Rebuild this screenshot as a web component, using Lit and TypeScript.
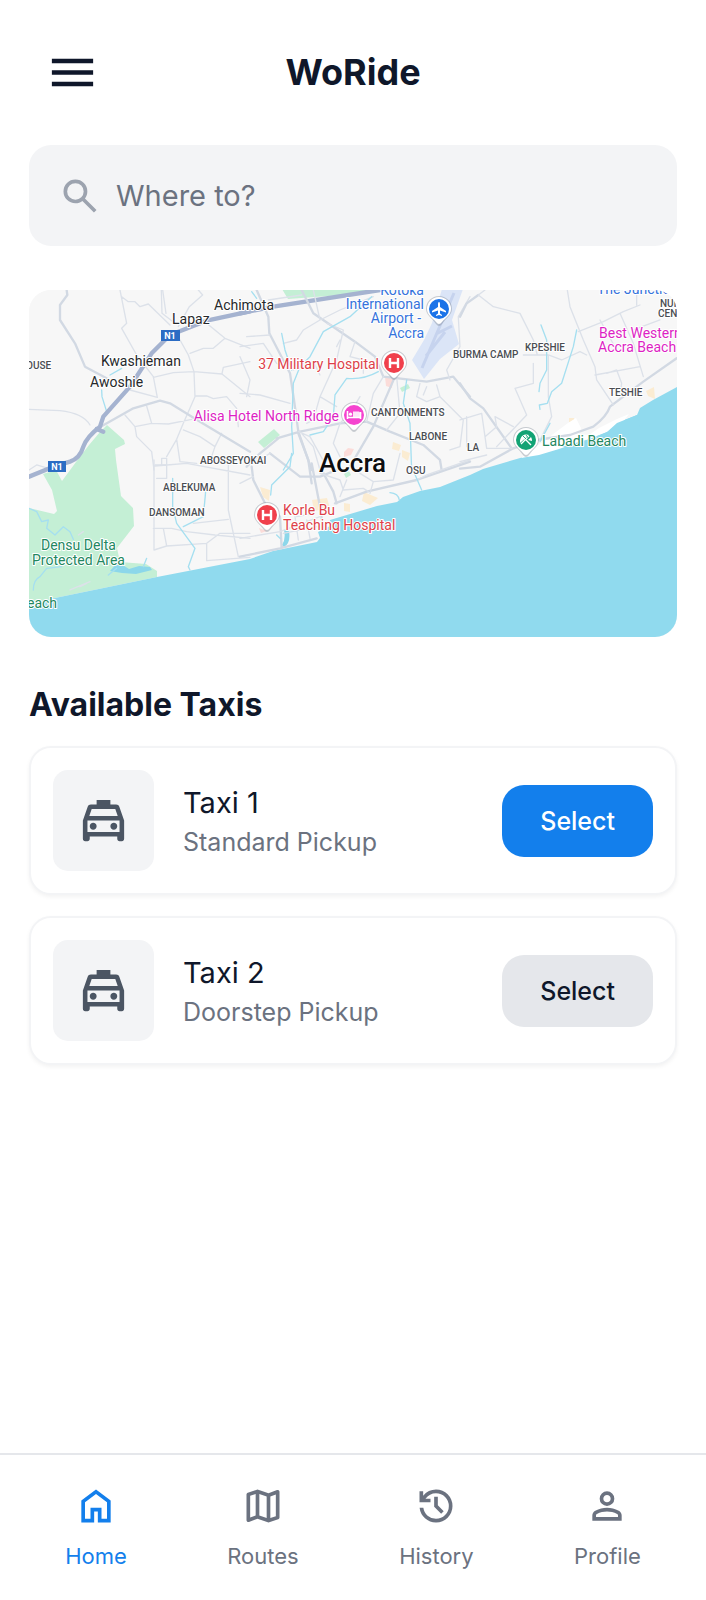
import { LitElement, html, css, svg } from "lit";
import { customElement, property, state } from "lit/decorators.js";

const ICONS: Record<string, string> = {
  menu: "M3 18h18v-2H3v2Zm0-5h18v-2H3v2Zm0-7v2h18V6H3Z",
  search:
    "m19.6 21-6.3-6.3q-.75.6-1.725.95T9.5 16q-2.725 0-4.612-1.888T3 9.5t1.888-4.612T9.5 3t4.613 1.888T16 9.5q0 1.1-.35 2.075T14.7 13.3l6.3 6.3-1.4 1.4ZM9.5 14q1.875 0 3.188-1.312T14 9.5t-1.312-3.187T9.5 5 6.313 6.313 5 9.5t1.313 3.188T9.5 14Z",
  taxi:
    "M6 19v1q0 .425-.288.713T5 21H4q-.425 0-.712-.288T3 20v-8l2.1-6q.15-.45.538-.725T6.5 5H9V3h6v2h2.5q.475 0 .863.275T18.9 6l2.1 6v8q0 .425-.288.713T20 21h-1q-.425 0-.712-.288T18 20v-1H6Zm-.2-9h12.4l-1.05-3H6.85L5.8 10ZM5 17h14v-5H5v5Zm2.5-1q.625 0 1.063-.438T9 14.5t-.438-1.062T7.5 13t-1.062.438T6 14.5t.438 1.063T7.5 16Zm9 0q.625 0 1.063-.438T18 14.5t-.438-1.062T16.5 13t-1.062.438T15 14.5t.438 1.063T16.5 16Z",
  home: "M6 19h3v-6h6v6h3v-9l-6-4.5L6 10v9Zm-2 2V9l8-6 8 6v12h-7v-6h-2v6H4Z",
  map:
    "m15 21-6-2.1-4.65 1.8q-.5.2-.925-.112T3 19.75v-14q0-.325.188-.575T3.7 4.8L9 3l6 2.1 4.65-1.8q.5-.2.925.113T21 4.25v14q0 .325-.188.575t-.512.375L15 21Zm-1-2.45V6.85l-4-1.4v11.7l4 1.4Zm2 0 3-1V5.7l-3 1.15v11.7ZM5 18.3l3-1.15V5.45l-3 1v11.85Z",
  history:
    "M12 21q-3.45 0-6.012-2.287T3.05 13H5.1q.35 2.6 2.313 4.3T12 19q2.925 0 4.963-2.037T19 12q0-2.925-2.037-4.962T12 5q-1.725 0-3.225.8T6.25 8H9v2H3V4h2v2.35q1.275-1.6 3.113-2.475T12 3q1.875 0 3.513.713t2.85 1.924 1.925 2.85T21 12q0 1.875-.712 3.513t-1.925 2.85-2.85 1.925T12 21Zm2.8-4.8L11 12.4V7h2v4.6l3.2 3.2-1.4 1.4Z",
  person:
    "M12 12q-1.65 0-2.825-1.175T8 8t1.175-2.825T12 4t2.825 1.175T16 8t-1.175 2.825T12 12Zm-8 8v-2.8q0-.85.438-1.563T5.6 14.55q1.55-.775 3.15-1.163T12 13t3.25.388 3.15 1.162q.725.375 1.163 1.088T20 17.2V20H4Zm2-2h12v-.8q0-.275-.138-.5t-.362-.35q-1.35-.675-2.725-1.012T12 15t-2.775.338T6.5 16.35q-.225.125-.363.35T6 17.2v.8Zm6-8q.825 0 1.413-.588T14 8t-.588-1.412T12 6t-1.412.588T10 8t.588 1.413T12 10Z",
};

@customElement("ui-icon")
class UiIcon extends LitElement {
  @property() name = "menu";
  static styles = css`
    :host { display: block; width: 44px; height: 44px; flex: none; }
    svg { display: block; width: 100%; height: 100%; fill: currentColor; }
  `;
  render() {
    return html`<svg viewBox="0 0 24 24" aria-hidden="true"><path fill-rule="evenodd" d=${ICONS[this.name]} /></svg>`;
  }
}

type Label = { x: number; y: number; kind: string; text: string; end?: boolean };

const LABELS: Label[] = [
  { x: 214, y: 310, kind: "town", text: "Achimota" },
  { x: 172, y: 324, kind: "town", text: "Lapaz" },
  { x: 101, y: 366, kind: "town", text: "Kwashieman" },
  { x: 90, y: 387, kind: "town", text: "Awoshie" },
  { x: 319, y: 472, kind: "city", text: "Accra" },
  { x: 26, y: 369, kind: "area", text: "OUSE" },
  { x: 453, y: 358, kind: "area", text: "BURMA CAMP" },
  { x: 525, y: 351, kind: "area", text: "KPESHIE" },
  { x: 371, y: 416, kind: "area", text: "CANTONMENTS" },
  { x: 409, y: 440, kind: "area", text: "LABONE" },
  { x: 467, y: 451, kind: "area", text: "LA" },
  { x: 609, y: 396, kind: "area", text: "TESHIE" },
  { x: 660, y: 307, kind: "area", text: "NUN" },
  { x: 658, y: 317, kind: "area", text: "CEN" },
  { x: 200, y: 464, kind: "area", text: "ABOSSEYOKAI" },
  { x: 163, y: 491, kind: "area", text: "ABLEKUMA" },
  { x: 149, y: 516, kind: "area", text: "DANSOMAN" },
  { x: 406, y: 474, kind: "area", text: "OSU" },
  { x: 424, y: 295, kind: "blue", text: "Kotoka", end: true },
  { x: 424, y: 309, kind: "blue", text: "International", end: true },
  { x: 421, y: 323, kind: "blue", text: "Airport -", end: true },
  { x: 424, y: 338, kind: "blue", text: "Accra", end: true },
  { x: 597, y: 294, kind: "blue", text: "The Junctic" },
  { x: 379, y: 369, kind: "red", text: "37 Military Hospital", end: true },
  { x: 283, y: 515, kind: "red", text: "Korle Bu" },
  { x: 283, y: 530, kind: "red", text: "Teaching Hospital" },
  { x: 339, y: 421, kind: "pink", text: "Alisa Hotel North Ridge", end: true },
  { x: 599, y: 338, kind: "pink", text: "Best Western" },
  { x: 598, y: 352, kind: "pink", text: "Accra Beach" },
  { x: 542, y: 446, kind: "green", text: "Labadi Beach" },
  { x: 41, y: 550, kind: "green", text: "Densu Delta" },
  { x: 32, y: 565, kind: "green", text: "Protected Area" },
  { x: 27, y: 608, kind: "green", text: "each" },
];

const pin = (x: number, y: number, color: string, glyph: unknown) => svg`
  <g transform="translate(${x} ${y})">
    <path d="M-13 0a13 13 0 1 1 26 0c0 6-6 9-10 15q-3 4-6 0c-4-6-10-9-10-15Z" fill="#7d8794" opacity=".4" />
    <path d="M-12 0a12 12 0 1 1 24 0c0 6-6 9-9 13q-3 4-6 0c-3-4-9-7-9-13Z" fill="#fff" />
    <circle r="10" fill=${color} />${glyph}
  </g>`;

const hospital = svg`<path d="M-4 -5v10M4 -5v10M-4 0h8" fill="none" stroke="#fff" stroke-width="2.4" />`;
const plane = svg`<path d="M0 -7q1 0 1 2v3l6 4v1.500l-6 -2v3l2 1.500v1l-3 -1l-3 1v-1l2 -1.500v-3l-6 2v-1.500l6 -4v-3q0 -2 1 -2Z" fill="#fff" />`;
const bed = svg`<path d="M-6.500 -4v8M-6.500 2.500h13M6.500 4v-7" fill="none" stroke="#fff" stroke-width="1.600" /><path d="M-1 -3.500h6l2 2v4h-8Z" fill="#fff" opacity=".85" /><circle cx="-3.500" cy="-.8" r="1.600" fill="#fff" />`;
const umbrella = svg`<path d="M-6 1a6.500 6.500 0 0 1 9 -6l-9 8Z M5 -3a6 6 0 0 1 1 4l-4 -1Z" fill="#fff" /><path d="M-2 -2l7 7M-5 4l8 -8" stroke="#fff" stroke-width="1.400" /><path d="M-3 -4l3 3M0 -5l3 4" stroke="#12a374" stroke-width=".9" />`;

@customElement("city-map")
class CityMap extends LitElement {
  static styles = css`
    :host { display: block; border-radius: 22px; overflow: hidden; background: #f7f7f7; }
    svg { display: block; width: 100%; height: auto; }
    text { font-family: Roboto, sans-serif; font-size: 14px; paint-order: stroke; stroke: #fff; stroke-width: 2px; stroke-linejoin: round; }
    .end { text-anchor: end; }
    .town { fill: #26282b; }
    .city { fill: #0d0e10; font-size: 26px; font-weight: 500; }
    .area { fill: #4a4d52; font-size: 10px; font-weight: 500; }
    .blue { fill: #3573dc; }
    .red { fill: #dd3f49; }
    .pink { fill: #dd1fc4; }
    .green { fill: #23875f; }
    .shield { fill: #fff; stroke: none; font-size: 9px; font-weight: 700; text-anchor: middle; }
    .line { fill: none; stroke-linejoin: round; stroke-linecap: round; }
    .minor { stroke: #dce1e9; stroke-width: 4; }
    .major { stroke: #d2d9e3; stroke-width: 7; }
    .trunk { stroke: #a5b3d0; stroke-width: 13; }
    .river { stroke: #a5dff0; stroke-width: 4; }
  `;

  render() {
    return html`
      <svg viewBox="29 290 648 347" role="img" aria-label="Map of Accra">
        <rect x="29" y="290" width="648" height="347" fill="#f7f7f7" />

        <path fill="#c4efd5" d="M107 425L124 440L125 444L115 449L116 460L121 496L133 508L134 526L117 548L120 562L146 564L157 571V577L55 598L29 606V508L54 514L57 511L52 490L43 474L56 470L62 481L76 462L89 445L100 432Z" />
        <path fill="#c4efd5" d="M282 289H374L356 294L288 299ZM258 442L274 429L280 435L264 448ZM400 388l8 -4l2 4l-8 4ZM344 474l5 -3l2 4l-5 3Z" />
        <path fill="#dbe5f7" d="M442 289H463L452 320L459 344L440 359L424 379L412 360L424 340L432 323Z" />
        <path fill="none" stroke="#c6d3ee" stroke-width="3" d="M454 293L422 368M445 332L426 356M452 326L436 334" />
        <path fill="#fbdcd9" d="M385 377l8 2l-1 9l-6 -2ZM344 452l4 -4l6 1l-3 6l-7 2ZM259 528l8 3l-6 2Z" />
        <path fill="#fbecd2" d="M260 487l10 3l-1 11l-6 -4ZM312 500l15 -2l3 10l-16 3ZM344 503l6 1v8l-6 -1ZM364 492l14 6l-8 7l-8 -4ZM393 442l8 3l-2 6l-7 -2ZM402 450l8 3l-2 8l-6 -4ZM646 391l8 -4l1 12l-7 -3ZM569 418h5v4h-5Z" />

        <path fill="#90daee" d="M29 604L55 598L157 577L250 559L273 551L317 542L320 538L318 532L330 526V520L377 506L397 502L403 497L420 491L440 487L470 475L483 469L527 456L540 452L587 440L607 432L617 423L637 415L640 408L653 400L677 387V637H29Z" />
        <path fill="#fff" d="M568 423l8 -5l5 10l-2 6l10 1l10 -7l18 -9l12 -5l-10 13l-20 8l-40 14l-20 6l-18 3Z" />
        <path fill="#90daee" d="M587 440L607 432L617 423L637 415L640 428L610 446L560 447Z" />
        <path fill="#8cd7ea" d="M110 571L118 562L129 569L139 566L150 567L152 570L136 574L122 573ZM284 530l5 1q2 12 -5 16l-2 -2q4 -6 2 -15Z" />

        <g class="line" transform="translate(20 280) scale(.3333)">
          <path class="minor" d="M300 30L320 130L305 145L350 225L400 290L412 352M305 50L325 65L345 65L360 80L385 72L450 135M428 30L438 100M424 30L426 100L465 130M535 30L548 45L508 80L475 140M560 130L615 175L690 205M615 175L580 205L550 205L510 220M480 180L505 225L522 275L525 350L490 430L470 478L440 530M400 292L460 278L522 275L606 282L610 262L690 245M606 282L690 350M525 348H560L580 356L620 350L650 385L655 440M330 330L412 352M315 405L345 440L350 470L395 515L402 570M380 378L395 430L445 432L515 418M345 440L395 430M490 450L540 470L585 500L605 460M585 500L575 530M470 478L480 545L530 550M405 555H440V535H425V555" />
          <path class="minor" d="M27 388L120 392Q190 400 210 435M27 570L50 555L100 570" />
          <path class="major" d="M140 30L142 45L120 75V120L165 190L195 260L260 295M230 447L340 385L420 362L450 370L540 425L690 515" />
          <path class="river" d="M305 265L270 285M245 330L246 350L260 395" />
          <path class="trunk" d="M27 590L100 560L150 545Q180 535 190 500Q200 470 240 440L250 410L330 320L395 220L450 165L560 122L690 94" />
          <path class="trunk" d="M230 447L250 455" />
        </g>
        <g class="line" transform="translate(240 280) scale(.3333)">
          <path class="trunk" d="M0 100L100 80L420 30" />
          <path class="major" d="M50 30L85 110L88 160L150 280L162 360L175 455L215 570M185 30L220 100L345 185L405 230L430 290L560 305L640 290L690 350M465 290L400 440L330 560M110 475L180 455L300 430L380 425L450 455L550 495L600 540L605 570M60 520L115 475M60 520L20 560M90 520L180 590L240 590L290 570" />
          <path class="minor" d="M630 300L620 270L660 200L655 110L690 50M85 60L185 45M0 200L70 190L110 250L160 270M20 170L90 165M220 30L240 120L190 150L170 180L130 190M240 120L300 90L400 50M260 130L310 150L290 240L240 350L290 380M160 270L220 245L240 285M345 185L330 230L370 240V280M300 180L290 200M240 350L220 420L200 430M300 430L280 490L300 530M380 425L400 340L430 290M360 350L330 400L300 430M470 290L480 400L440 450M540 310L530 350L560 365L600 350L590 315M560 320L550 345M600 350L640 390L670 420L660 500L630 510M180 455L220 500L240 570M175 455L210 470L260 560M0 340L60 345L150 370M0 230L30 300L20 350" />
          <path class="river" d="M395 50L330 110L250 155L210 230L180 260L160 310L155 440L160 520L130 570M125 160L135 210L155 270M35 35L50 55M415 275Q370 300 320 295L285 345L280 410L250 455L210 465M500 300L490 370L510 430L515 570" />
        </g>
        <g class="line" transform="translate(460 280) scale(.3333)">
          <path class="major" d="M55 45L20 70L0 110M0 310L30 355L70 385L155 505M0 566L60 560L160 505L230 480L330 465L400 440Q440 410 450 380L490 350L550 305L650 235" />
          <path class="minor" d="M55 45L100 80L180 100L220 180L232 225M322 30L330 80L370 180L405 260L410 300L460 375M55 45L75 30M355 155L430 125L490 95L540 75M530 30V75M480 100L520 190L550 290M420 120L470 210M405 285L540 260M440 280L470 270L485 310L480 350M190 225L232 225L265 225L305 240L360 215L380 225M220 250V310L165 325L200 405L110 500M265 225V350L275 410L240 480M160 440L105 410L110 440L75 470L80 505L155 505M0 420L65 400L75 470M0 545L80 525M20 500V410M520 150L600 120" />
          <path class="river" d="M243 135L260 180V270L240 310L237 335M350 150L340 200L305 310L275 335L262 370L238 375L240 388M270 430L240 485" />
        </g>
        <g class="line" transform="translate(20 460) scale(.3333)">
          <path class="minor" d="M402 0V270L440 258L560 250L600 220H690M405 18L440 15V55H410M400 205H455L500 215L585 225L690 235M520 190L625 178M625 0V150L655 290M500 10L690 45M560 250V302L690 292M430 205L440 258M440 15L500 10" />
          <path class="river" d="M458 55V140L470 190L525 265L505 320L510 330M557 95L550 170L490 200M27 145L50 155L65 185L85 180L80 205L105 225L130 200L150 215L160 238M40 390Q40 360 60 350L80 325L125 320M380 295L370 320M265 345L290 325" />
          <path class="minor" d="M150 390L210 365M180 380L200 370M175 225L190 215" />
        </g>
        <g class="line" transform="translate(240 420) scale(.3333)">
          <path class="major" d="M0 410L120 385L230 355M285 250L380 215L530 180L690 125M35 140L40 180L75 250L120 290L125 385M215 130L240 260L250 330M245 150L280 215L290 250M175 40L205 120L215 190" />
          <path class="minor" d="M0 355L120 335L240 290M130 340L230 320M165 290L175 360M200 300L210 355M0 190L40 170M240 160L300 180L310 210L370 205L385 215M360 160L400 185L390 220M400 185L460 180L480 100M170 290L225 280M300 230L320 180M530 180L560 165L690 120M40 130L90 100" />
          <path class="river" d="M155 100L150 140L95 195L92 225M515 140L545 210M110 345L120 355M450 218Q475 220 478 240" />
        </g>

        <rect x="161" y="330" width="19" height="11" fill="#2b6cc4" />
        <text class="shield" x="170" y="339">N1</text>
        <rect x="48" y="461" width="18" height="11" fill="#2b6cc4" />
        <text class="shield" x="57" y="470">N1</text>

        ${LABELS.map((l) => svg`<text class="${l.kind}${l.end ? " end" : ""}" x=${l.x} y=${l.y}>${l.text}</text>`)}
        ${pin(439, 309, "#1b73e8", plane)}
        ${pin(394, 363, "#f0404c", hospital)}
        ${pin(267, 515, "#f0404c", hospital)}
        ${pin(354, 415, "#f544cf", bed)}
        ${pin(526, 440, "#12a374", umbrella)}
      </svg>
    `;
  }
}

@customElement("app-root")
class AppRoot extends LitElement {
  @state() private selected = 1;

  private taxis = [
    { id: 1, name: "Taxi 1", kind: "Standard Pickup" },
    { id: 2, name: "Taxi 2", kind: "Doorstep Pickup" },
  ];

  private tabs = [
    { icon: "home", label: "Home" },
    { icon: "map", label: "Routes" },
    { icon: "history", label: "History" },
    { icon: "person", label: "Profile" },
  ];

  static styles = css`
    :host {
      display: flex; flex-direction: column; min-height: 100vh;
      background: #fff; color: #0f172a; font-family: Inter, sans-serif;
    }
    *, *::before { box-sizing: border-box; }
    h1, h2, h3, p, ul { margin: 0; padding: 0; }
    button, input { font: inherit; color: inherit; border: 0; margin: 0; }
    button { cursor: pointer; }
    header {
      display: grid; grid-template-columns: 55px 1fr 55px; align-items: center;
      padding: 45px;
    }
    .menu { background: none; padding: 0; }
    .menu ui-icon { width: 55px; height: 55px; }
    h1 { font-size: 36px; line-height: 55px; font-weight: 700; text-align: center; }
    main { flex: 1; padding: 0 29px 44px; }
    .search {
      display: flex; align-items: center; gap: 14px; height: 101px; padding: 0 29px;
      background: #f3f4f6; border-radius: 22px; color: #9ca3af;
    }
    .search input {
      flex: 1; min-width: 0; padding: 0; background: none; outline: none;
      font-size: 29px; line-height: 44px; color: #0f172a;
    }
    .search input::placeholder { color: #6b7280; opacity: 1; }
    city-map { margin-top: 44px; }
    h2 { margin-top: 44px; font-size: 32px; line-height: 48px; font-weight: 700; }
    .list { display: grid; gap: 21px; margin-top: 17px; list-style: none; }
    .card {
      display: flex; align-items: center; gap: 29px; padding: 22px;
      background: #fff; border: 2px solid #f3f4f6; border-radius: 22px;
      box-shadow: 0 2px 4px rgba(0, 0, 0, 0.05);
    }
    .tile {
      display: grid; place-items: center; width: 101px; height: 101px;
      background: #f3f4f6; border-radius: 15px; color: #4b5563;
    }
    .tile ui-icon { width: 55px; height: 55px; }
    .info { flex: 1; }
    h3 { font-size: 29px; line-height: 43px; font-weight: 400; }
    .info p { font-size: 25px; line-height: 36px; color: #6b7280; }
    .pick {
      height: 72px; padding: 0 38px; border-radius: 22px;
      background: #e5e7eb; font-size: 25px; line-height: 36px; font-weight: 500;
    }
    .pick[aria-pressed="true"] { background: #137fec; color: #fff; }
    nav {
      display: flex; justify-content: space-around; padding: 29px 15px 28px;
      border-top: 2px solid #e5e7eb;
    }
    nav a {
      display: flex; flex-direction: column; align-items: center; gap: 12px;
      color: #6b7280; text-decoration: none;
      font-size: 22px; line-height: 32px; font-weight: 400;
    }
    nav a[aria-current] { color: #137fec; }
  `;

  render() {
    return html`
      <header>
        <button class="menu" aria-label="Menu"><ui-icon name="menu"></ui-icon></button>
        <h1>WoRide</h1>
      </header>
      <main>
        <label class="search">
          <ui-icon name="search"></ui-icon>
          <input type="text" placeholder="Where to?" aria-label="Where to?" />
        </label>
        <city-map></city-map>
        <h2>Available Taxis</h2>
        <ul class="list">
          ${this.taxis.map(
            (t) => html`
              <li class="card">
                <div class="tile"><ui-icon name="taxi"></ui-icon></div>
                <div class="info">
                  <h3>${t.name}</h3>
                  <p>${t.kind}</p>
                </div>
                <button
                  class="pick"
                  aria-pressed=${this.selected === t.id ? "true" : "false"}
                  @click=${() => (this.selected = t.id)}
                >Select</button>
              </li>
            `
          )}
        </ul>
      </main>
      <nav>
        ${this.tabs.map((t, i) =>
          i === 0
            ? html`<a href="#home" aria-current="page"><ui-icon name=${t.icon}></ui-icon>${t.label}</a>`
            : html`<a href="#${t.label.toLowerCase()}"><ui-icon name=${t.icon}></ui-icon>${t.label}</a>`
        )}
      </nav>
    `;
  }
}
